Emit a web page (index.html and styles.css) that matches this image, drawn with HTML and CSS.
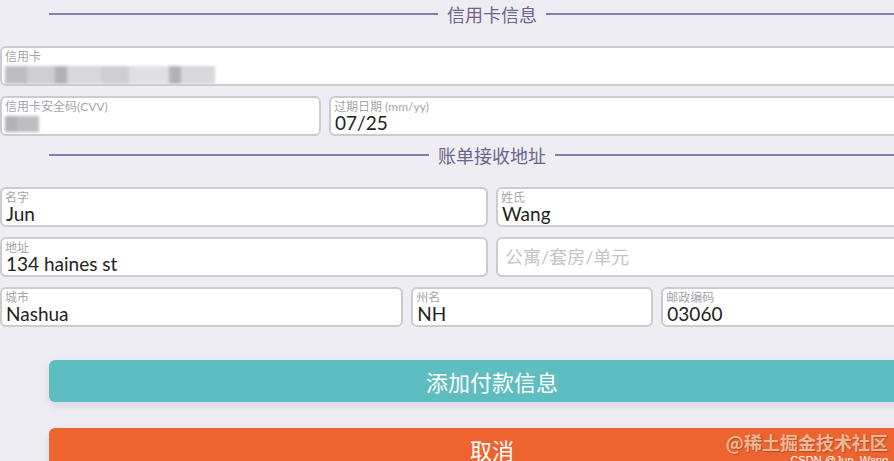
FILE: index.html
```html
<!DOCTYPE html>
<html lang="zh">

<head>
  <meta charset="UTF-8">
  <meta name="viewport" content="width=device-width, initial-scale=1.0">
  <title>付款信息</title>
  <link rel="stylesheet" href="styles.css">
</head>

<body>
  <form class="pay-form">
    <div class="divider"><span>信用卡信息</span></div>

    <div class="row single">
      <label class="field">
        <span class="label">信用卡</span>
        <span class="masked">
          <i class="m1"></i><i class="m2"></i><i class="m3"></i><i class="m4"></i><i class="m2"></i><i class="m5"></i><i class="m3"></i><i class="m4"></i>
        </span>
      </label>
    </div>

    <div class="row card-row">
      <label class="field">
        <span class="label">信用卡安全码(CVV)</span>
        <span class="masked short"><i class="m3"></i><i class="m1"></i></span>
      </label>
      <label class="field">
        <span class="label">过期日期 (mm/yy)</span>
        <input class="value" type="text" value="07/25">
      </label>
    </div>

    <div class="divider second"><span>账单接收地址</span></div>

    <div class="row">
      <label class="field">
        <span class="label">名字</span>
        <input class="value" type="text" value="Jun">
      </label>
      <label class="field">
        <span class="label">姓氏</span>
        <input class="value" type="text" value="Wang">
      </label>
    </div>

    <div class="row">
      <label class="field">
        <span class="label">地址</span>
        <input class="value" type="text" value="134 haines st">
      </label>
      <label class="field plain">
        <input class="value" type="text" placeholder="公寓/套房/单元">
      </label>
    </div>

    <div class="row city-row">
      <label class="field">
        <span class="label">城市</span>
        <input class="value" type="text" value="Nashua">
      </label>
      <label class="field">
        <span class="label">州名</span>
        <input class="value" type="text" value="NH">
      </label>
      <label class="field">
        <span class="label">邮政编码</span>
        <input class="value" type="text" value="03060">
      </label>
    </div>

    <button type="button" class="btn add">添加付款信息</button>
    <button type="button" class="btn cancel">取消</button>
  </form>

  <div class="watermark">@稀土掘金技术社区</div>
  <div class="watermark-sub">CSDN @Jun_Wang</div>
</body>

</html>
```

FILE: styles.css
```css
html,
body {
  margin: 0;
  overflow: hidden;
}

body {
  position: relative;
  width: 894px;
  height: 461px;
  background: #efedf4;
  font-family: Lato, "Noto Sans CJK SC", sans-serif;
}

.pay-form {
  width: 984px;
}

/* section title with lines */
.divider {
  display: flex;
  align-items: center;
  height: 28px;
  margin: 0 5%;
  color: #6c6489;
  font-size: 18px;
}

.divider::before,
.divider::after {
  content: '';
  flex: 1;
  height: 2px;
  background: #877cab;
}

.divider span {
  padding: 0 9px;
}

.divider.second {
  margin-top: 5px;
}

.row {
  display: grid;
  grid-template-columns: 1fr 1fr;
  gap: 8px;
  margin-top: 10px;
}

.row.single {
  grid-template-columns: 1fr;
}

.row.card-row {
  grid-template-columns: 321px 1fr;
}

.row.city-row {
  grid-template-columns: 5fr 3fr 4fr;
}

.divider + .row {
  margin-top: 18px;
}

.field {
  min-width: 0;
  display: flex;
  flex-direction: column;
  height: 40px;
  box-sizing: border-box;
  padding: 3px 3px 0;
  border: 2px solid #cdcbd1;
  border-radius: 6px;
  background: #fff;
  overflow: hidden;
}

.label {
  font-size: 12px;
  line-height: 12px;
  color: #a6a4ab;
}

.value {
  width: 100%;
  min-width: 0;
  margin: 0;
  padding: 0 0 0 1px;
  border: 0;
  outline: none;
  background: transparent;
  font-family: Lato, "Noto Sans CJK SC", sans-serif;
  font-size: 19px;
  line-height: 20px;
  height: 20px;
  color: #222;
}

.field.plain {
  justify-content: center;
  padding: 0 6px;
}

.field.plain .value {
  font-size: 18px;
  height: 24px;
  line-height: 24px;
}

.value::placeholder {
  color: #c6c4cb;
}

/* blurred card numbers */
.masked {
  display: flex;
  height: 19px;
  margin-top: 3px;
  filter: blur(1.5px);
}

.masked i {
  display: block;
  height: 100%;
}

.masked .m1 { width: 22px; background: #bdbcc0; }
.masked .m2 { width: 28px; background: #cecdd1; }
.masked .m3 { width: 12px; background: #b2b1b5; }
.masked .m4 { width: 34px; background: #d8d7da; }
.masked .m5 { width: 40px; background: #e0dfe2; }

.masked.short {
  height: 16px;
}

.btn {
  display: block;
  width: 90%;
  height: 42px;
  margin: 33px 5% 0;
  border: 0;
  border-radius: 6px;
  color: #fff;
  font-family: "Noto Sans CJK SC", sans-serif;
  font-size: 22px;
  box-shadow: 0 4px 8px rgba(60, 50, 90, 0.12);
}

.btn.add {
  background: #5ebdc0;
}

.btn.cancel {
  margin-top: 26px;
  background: #ed6430;
}

.watermark {
  position: absolute;
  top: 431px;
  right: 6px;
  font-family: "Noto Sans CJK SC", sans-serif;
  font-size: 18px;
  line-height: 22px;
  font-weight: bold;
  color: rgba(246, 200, 170, 0.85);
  text-shadow: 1px 1px 1px rgba(110, 50, 20, 0.45);
}

.watermark-sub {
  position: absolute;
  top: 454px;
  right: 6px;
  font-family: "Liberation Sans", sans-serif;
  font-size: 11px;
  line-height: 12px;
  color: #fff;
}
```
